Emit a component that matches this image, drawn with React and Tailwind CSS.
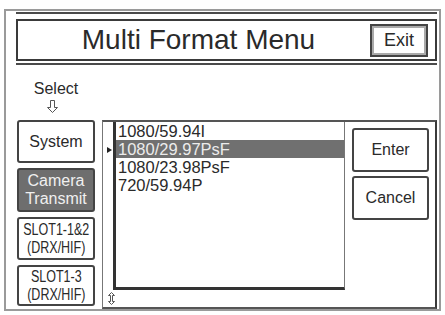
import React from 'react';

const FONT = { fontFamily: '"Liberation Sans", Arial, sans-serif' };

const formats = ['1080/59.94I', '1080/29.97PsF', '1080/23.98PsF', '720/59.94P'];
const SELECTED = 1;

const SideButton = ({ className = '', children }) => (
    <div className={`w-[78px] border-2 border-[#444] rounded-[3px] flex flex-col items-center justify-center text-center ${className}`}>
        {children}
    </div>
);

const SlotLabel = ({ lines }) => (
    <div className="inline-block scale-x-[0.78] text-[16px] leading-[18px] text-[#2a2a2a] whitespace-nowrap">
        {lines.map(l => <div key={l}>{l}</div>)}
    </div>
);

const App = () => {
    return (
        <div className="w-[445px] h-[315px] bg-white pt-[9px] pl-[4px]" style={FONT}>
            <div className="w-[437px] h-[302px] border-2 border-[#9a9a9a]">
                {/* title */}
                <div className="mt-[1px] ml-[10px] w-[421px] border-t-2 border-b-2 border-[#4a4a4a] pt-[5px] pb-[2px]">
                    <div className="h-[42px] border-2 border-[#3a3a3a] flex items-center">
                        <div className="flex-1 text-center pl-[9px] text-[28px] leading-[32px] text-[#2a2a2a]">Multi Format Menu</div>
                        <div className="mr-[7px] w-[58px] h-[33px] border-2 border-[#444]">
                            <div className="w-full h-full border-2 border-[#aaa] flex items-center justify-center text-[18px] text-[#2a2a2a]">Exit</div>
                        </div>
                    </div>
                </div>

                {/* body */}
                <div className="flex items-start">
                    <div className="ml-[11px] w-[78px] flex flex-col">
                        <div className="mt-[15px] text-center text-[16px] leading-[18px] text-[#2a2a2a]">Select</div>
                        <svg className="mt-[2px] ml-[30px]" width="11" height="13" viewBox="0 0 11 13">
                            <polygon points="3.5,0.5 7.5,0.5 7.5,7.5 10.5,7.5 5.5,12.5 0.5,7.5 3.5,7.5" fill="none" stroke="#555" strokeWidth="1" />
                        </svg>
                        <SideButton className="mt-[7px] h-[43px]">
                            <span className="text-[16px] text-[#2a2a2a]">System</span>
                        </SideButton>
                        <SideButton className="mt-[5px] h-[44px] bg-[#6e6e6e] border-[#4a4a4a]">
                            <div className="text-[16px] leading-[18px] text-[#f0f0f0]">
                                <div>Camera</div>
                                <div>Transmit</div>
                            </div>
                        </SideButton>
                        <SideButton className="mt-[5px] h-[43px]">
                            <SlotLabel lines={['SLOT1-1&2', '(DRX/HIF)']} />
                        </SideButton>
                        <SideButton className="mt-[5px] h-[41px]">
                            <SlotLabel lines={['SLOT1-3', '(DRX/HIF)']} />
                        </SideButton>
                    </div>

                    <div className="ml-[7px] mt-[55px] w-[335px] h-[189px] border-l border-l-[#777] border-t-2 border-t-[#555] border-r-2 border-r-[#3a3a3a] border-b-2 border-b-[#555] flex">
                        <div className="w-[242px] flex flex-col">
                            <div className="h-[168px] flex">
                                <div className="w-[10px]">
                                    <svg className="mt-[25px] ml-[4px]" width="5" height="6" viewBox="0 0 5 6">
                                        <polygon points="0,0 5,3 0,6" fill="#222" />
                                    </svg>
                                </div>
                                <div className="flex-1 border-l-[3px] border-b-[3px] border-r border-[#333] border-r-[#777]">
                                    {formats.map((f, i) => (
                                        <div key={f} className={`h-[18px] pl-[2px] text-[16.5px] leading-[18px] whitespace-nowrap ${i === SELECTED ? 'bg-[#707070] text-[#ececec]' : 'text-[#2a2a2a]'}`}>
                                            {f}
                                        </div>
                                    ))}
                                </div>
                            </div>
                            <div className="flex-1 pl-[5px] pt-[2px]">
                                <svg width="7" height="13" viewBox="0 0 7 13">
                                    <polygon points="3.5,0.5 6.5,3.5 4.5,3.5 4.5,9.5 6.5,9.5 3.5,12.5 0.5,9.5 2.5,9.5 2.5,3.5 0.5,3.5" fill="none" stroke="#555" strokeWidth="1" />
                                </svg>
                            </div>
                        </div>
                        <div className="flex-1 pl-[7px] pt-[6px] flex flex-col gap-[4px]">
                            <div className="w-[77px] h-[44px] border-2 border-[#444] rounded-[3px] flex items-center justify-center text-[16px] text-[#2a2a2a]">Enter</div>
                            <div className="w-[77px] h-[44px] border-2 border-[#444] rounded-[3px] flex items-center justify-center text-[16px] text-[#2a2a2a]">Cancel</div>
                        </div>
                    </div>
                </div>
            </div>
        </div>
    );
};

export default App;
